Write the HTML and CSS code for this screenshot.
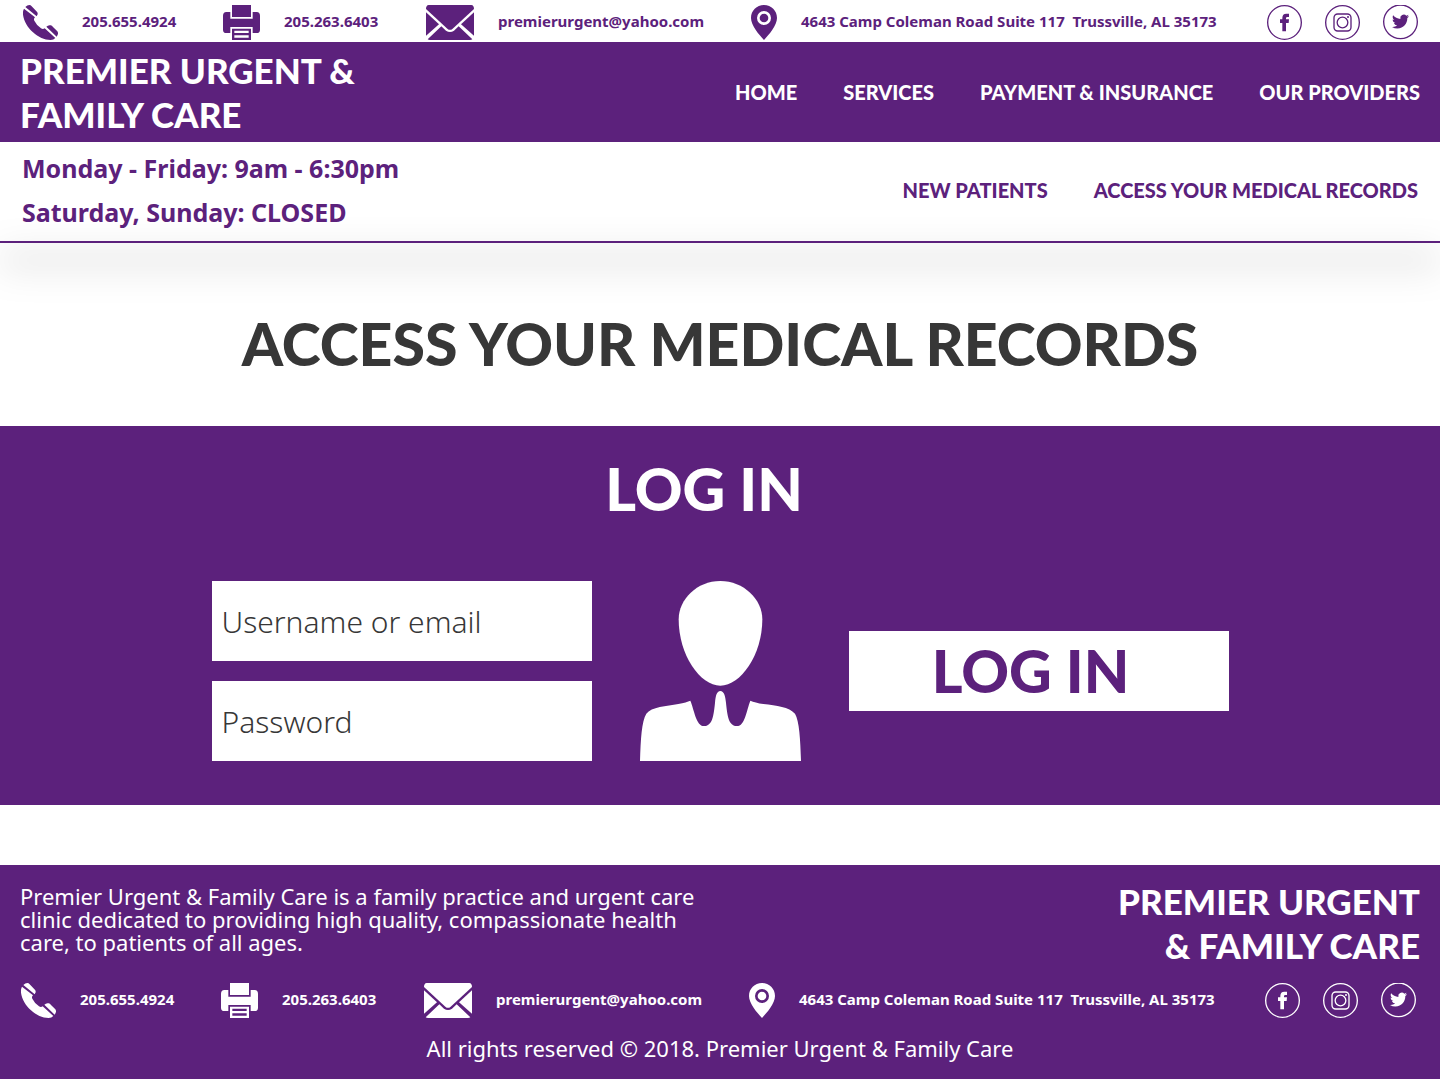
FILE: index.html
```
<!DOCTYPE html>
<html lang="en">
  <head>
    <meta charset="UTF-8" />
    <meta name="viewport" content="width=device-width, initial-scale=1.0" />
    <title>Access Your Medical Records</title>
    <link rel="stylesheet" href="styles.css">
  </head>
  <body>
    <!-- shared icons -->
    <svg class="sprite" aria-hidden="true">
      <symbol id="phone" viewBox="0 0 105 105">
        <path d="M3 11Q-1 17 0 29C3 50 14 67 30 82C46 97 64 105 83 105Q92 105 97 99L65 70Q60 74 54 70Q41 61 34 47Q31 41 36 37Z" />
        <path d="M7 6Q13 0 19 0Q23 0 26 4L43 22Q47 28 41 34Z" />
        <path d="M70 65Q76 59 83 61Q87 62 90 66L103 79Q108 86 101 95Z" />
      </symbol>
      <symbol id="fax" viewBox="0 0 111 105">
        <path d="M27 0H84V36H27Z" />
        <path d="M10 21H22V41H89V21H101Q111 22 111 32V74Q111 84 101 84H89V66H22V84H10Q0 84 0 74V32Q0 22 10 21Z" />
        <path fill-rule="evenodd" d="M27 71H84V105H27ZM34 77V84H77V77ZM34 91V98H77V91Z" />
      </symbol>
      <symbol id="mail" viewBox="0 0 144 105">
        <path d="M8 0H136Q144 1 144 12L80 71Q72 78 64 71L0 12Q0 1 8 0Z" />
        <path d="M0 22L39 58L0 92Z" />
        <path d="M144 22L105 58L144 92Z" />
        <path d="M5 103L46 64L60 77Q72 85 84 77L98 64L139 103Q136 105 132 105H12Q8 105 5 103Z" />
      </symbol>
      <symbol id="pin" viewBox="0 0 78 105">
        <path fill-rule="evenodd" d="M39 0C17 0 0 17 0 39C0 61 24 89 39 105C54 89 78 61 78 39C78 17 61 0 39 0ZM39 18A21 21 0 1 1 39 60A21 21 0 1 1 39 18Z" />
        <circle cx="39" cy="39" r="13" />
      </symbol>
      <symbol id="facebook" viewBox="0 0 105 105">
        <circle class="line" cx="52.5" cy="52.5" r="50.5" />
        <path d="M46 79V54H39V43H46V39Q46 26 58 26H66V36H61Q57 36 57 40V43H66L65 54H57V79Z" />
      </symbol>
      <symbol id="instagram" viewBox="0 0 105 105">
        <circle class="line" cx="52.5" cy="52.5" r="50.5" />
        <rect class="line" x="27" y="27" width="51" height="51" rx="11" />
        <circle class="line" cx="52.5" cy="52.5" r="16" />
        <circle cx="69" cy="36" r="3" />
      </symbol>
      <symbol id="twitter" viewBox="0 0 105 105">
        <circle class="line" cx="52.5" cy="50.5" r="50.5" />
        <path transform="translate(27 24) scale(2.13)" d="M23.953 4.57a10 10 0 01-2.825.775 4.958 4.958 0 002.163-2.723c-.951.555-2.005.959-3.127 1.184a4.92 4.92 0 00-8.384 4.482C7.69 8.095 4.067 6.13 1.64 3.162a4.822 4.822 0 00-.666 2.475c0 1.71.87 3.213 2.188 4.096a4.904 4.904 0 01-2.228-.616v.06a4.923 4.923 0 003.946 4.827 4.996 4.996 0 01-2.212.085 4.936 4.936 0 004.604 3.417 9.867 9.867 0 01-6.102 2.105c-.39 0-.779-.023-1.17-.067a13.995 13.995 0 007.557 2.209c9.053 0 13.998-7.496 13.998-13.985 0-.21 0-.42-.015-.63A9.935 9.935 0 0024 4.59z" />
      </symbol>
    </svg>

    <header>
      <div class="contact-bar">
        <a class="contact" href="tel:2056554924">
          <svg width="35" height="35"><use href="#phone" /></svg>
          <span>205.655.4924</span>
        </a>
        <a class="contact" href="tel:2052636403">
          <svg width="37" height="35"><use href="#fax" /></svg>
          <span>205.263.6403</span>
        </a>
        <a class="contact" href="mailto:premierurgent@yahoo.com">
          <svg width="48" height="35"><use href="#mail" /></svg>
          <span>premierurgent@yahoo.com</span>
        </a>
        <a class="contact" href="#">
          <svg width="26" height="35"><use href="#pin" /></svg>
          <span>4643 Camp Coleman Road Suite 117&nbsp; Trussville, AL 35173</span>
        </a>
        <div class="social">
          <a href="#" aria-label="Facebook"><svg width="35" height="35"><use href="#facebook" /></svg></a>
          <a href="#" aria-label="Instagram"><svg width="35" height="35"><use href="#instagram" /></svg></a>
          <a href="#" aria-label="Twitter"><svg width="35" height="35"><use href="#twitter" /></svg></a>
        </div>
      </div>

      <div class="main-bar">
        <a class="brand" href="#">PREMIER URGENT &amp; FAMILY CARE</a>
        <nav class="main-nav">
          <a href="#">HOME</a>
          <a href="#">SERVICES</a>
          <a href="#">PAYMENT &amp; INSURANCE</a>
          <a href="#">OUR PROVIDERS</a>
        </nav>
      </div>

      <div class="sub-bar">
        <div class="hours">
          <p>Monday - Friday: 9am - 6:30pm</p>
          <p>Saturday, Sunday: CLOSED</p>
        </div>
        <nav class="sub-nav">
          <a href="#">NEW PATIENTS</a>
          <a href="#">ACCESS YOUR MEDICAL RECORDS</a>
        </nav>
      </div>
      <hr class="divider" />
    </header>

    <main>
      <h1>ACCESS YOUR MEDICAL RECORDS</h1>

      <section class="login">
        <h2>LOG IN</h2>
        <form class="login-form">
          <div class="fields">
            <input type="text" id="username" placeholder="Username or email" aria-label="Username or email" />
            <input type="password" id="password" placeholder="Password" aria-label="Password" />
          </div>
          <svg class="person" viewBox="0 0 483 540" width="161" height="180" aria-hidden="true">
            <path d="M241 0C311 0 367 55 367 115C367 222 302 314 241 314C180 314 116 222 116 115C116 55 171 0 241 0Z" />
            <path d="M0 540C2 475 5 420 19 398C34 378 80 375 115 369Q140 364 151 359C163 387 168 435 192 435C217 435 221 405 225 365C227 345 230 330 241 330C252 330 256 345 258 365C262 405 266 435 291 435C315 435 319 390 331 359Q345 365 370 369C410 374 447 378 465 398C478 420 481 475 483 540Z" />
          </svg>
          <button class="login-button" type="submit">LOG IN</button>
        </form>
      </section>
    </main>

    <footer>
      <div class="footer-top">
        <p class="about">Premier Urgent &amp; Family Care is a family practice and urgent care clinic dedicated to providing high quality, compassionate health care, to patients of all ages.</p>
        <a class="brand" href="#">PREMIER URGENT &amp; FAMILY CARE</a>
      </div>

      <div class="contact-bar">
        <a class="contact" href="tel:2056554924">
          <svg width="35" height="35"><use href="#phone" /></svg>
          <span>205.655.4924</span>
        </a>
        <a class="contact" href="tel:2052636403">
          <svg width="37" height="35"><use href="#fax" /></svg>
          <span>205.263.6403</span>
        </a>
        <a class="contact" href="mailto:premierurgent@yahoo.com">
          <svg width="48" height="35"><use href="#mail" /></svg>
          <span>premierurgent@yahoo.com</span>
        </a>
        <a class="contact" href="#">
          <svg width="26" height="35"><use href="#pin" /></svg>
          <span>4643 Camp Coleman Road Suite 117&nbsp; Trussville, AL 35173</span>
        </a>
        <div class="social">
          <a href="#" aria-label="Facebook"><svg width="35" height="35"><use href="#facebook" /></svg></a>
          <a href="#" aria-label="Instagram"><svg width="35" height="35"><use href="#instagram" /></svg></a>
          <a href="#" aria-label="Twitter"><svg width="35" height="35"><use href="#twitter" /></svg></a>
        </div>
      </div>

      <p class="copyright">All rights reserved © 2018. Premier Urgent &amp; Family Care</p>
    </footer>
  </body>
</html>
```
FILE: styles.css
```
* {
  box-sizing: border-box;
}

body {
  margin: 0;
  font-family: "Noto Sans", sans-serif;
  color: #5c217c;
  background: #fff;
}

h1,
h2,
p {
  margin: 0;
}

a {
  color: inherit;
  text-decoration: none;
}

svg {
  display: block;
  flex-shrink: 0;
  fill: currentColor;
}

.line {
  fill: none;
  stroke: currentColor;
  stroke-width: 4;
}

.sprite {
  position: absolute;
  width: 0;
  height: 0;
}

/* contact row, used in header and footer */
.contact-bar {
  display: grid;
  grid-template-columns: 200fr 203fr 325fr 516fr 151fr;
  align-items: center;
  padding: 5px 22px 2px 23px;
}

.contact {
  display: flex;
  align-items: flex-start;
  gap: 24px;
  font-size: 15px;
  line-height: 32px;
  font-weight: 700;
  white-space: nowrap;
}

.social {
  display: flex;
  justify-content: space-between;
}

/* header */
.main-bar {
  display: flex;
  align-items: center;
  justify-content: space-between;
  padding: 6px 20px;
  color: #fff;
  background: #5c217c;
}

.brand {
  max-width: 360px;
  font-family: Lato, sans-serif;
  font-size: 35px;
  line-height: 44px;
  font-weight: 900;
}

.main-nav,
.sub-nav {
  display: flex;
  gap: 46px;
  font-family: Lato, sans-serif;
  font-size: 20px;
  line-height: 24px;
  font-weight: 900;
}

.sub-bar {
  display: flex;
  align-items: center;
  justify-content: space-between;
  padding: 4px 22px 7px;
}

.hours {
  font-size: 25px;
  line-height: 44px;
  font-weight: 700;
}

.divider {
  height: 2px;
  margin: 0;
  border: 0;
  background: #5c217c;
  box-shadow: 0 18px 36px #000;
}

/* page */
h1 {
  padding: 71px 20px 52px;
  font-family: Lato, sans-serif;
  font-size: 59px;
  line-height: 60px;
  font-weight: 900;
  text-align: center;
  color: #373737;
}

.login {
  padding: 33px 20px 44px;
  background: #5c217c;
  color: #fff;
}

.login h2 {
  padding-right: 32px;
  margin-bottom: 62px;
  font-family: Lato, sans-serif;
  font-size: 59px;
  line-height: 60px;
  font-weight: 900;
  text-align: center;
}

.login-form {
  display: flex;
  align-items: center;
  justify-content: center;
  gap: 48px;
}

.fields {
  display: flex;
  flex-direction: column;
  gap: 20px;
}

.fields input {
  width: 380px;
  height: 80px;
  padding: 0 10px;
  border: 0;
  border-radius: 0;
  font-family: "Noto Sans", sans-serif;
  font-size: 30px;
  font-weight: 300;
  color: #373737;
  background: #fff;
}

.fields input::placeholder {
  color: #373737;
  opacity: 1;
}

.login-button {
  width: 380px;
  height: 80px;
  padding: 0 16px 0 0;
  border: 0;
  font-family: Lato, sans-serif;
  font-size: 59px;
  line-height: 60px;
  font-weight: 900;
  color: #5c217c;
  background: #fff;
  cursor: pointer;
}

/* footer */
footer {
  margin-top: 60px;
  padding: 14px 0 16px;
  color: #fff;
  background: #5c217c;
}

.footer-top {
  display: flex;
  align-items: flex-start;
  justify-content: space-between;
  padding: 0 20px;
}

.footer-top .brand {
  max-width: 320px;
  text-align: right;
}

.about {
  max-width: 700px;
  padding-top: 6px;
  font-size: 22px;
  line-height: 23px;
}

footer .contact-bar {
  padding: 16px 24px 15px 21px;
}

.copyright {
  font-size: 22px;
  line-height: 30px;
  text-align: center;
}
```
